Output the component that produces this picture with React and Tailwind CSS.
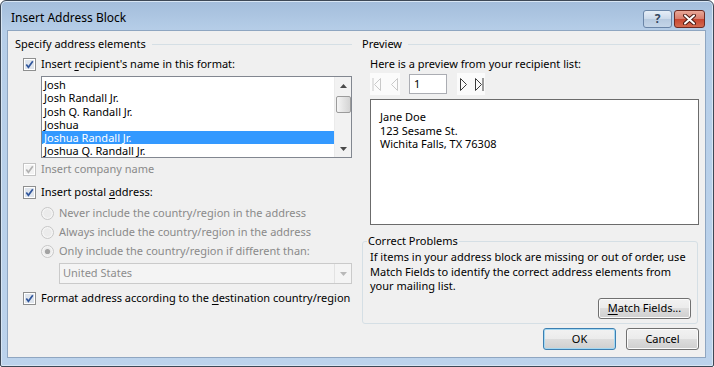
import React from 'react'

const font = "font-['Noto_Sans','Open_Sans',sans-serif]"
const btn = 'flex items-center justify-center rounded-[3px] border bg-[linear-gradient(#f2f2f2,#ebebeb_50%,#dddddd_50%,#cfcfcf)] text-black'
const names = ['Josh', 'Josh Randall Jr.', 'Josh Q. Randall Jr.', 'Joshua', 'Joshua Randall Jr.', 'Joshua Q. Randall Jr.']

function CheckBox({ disabled }) {
    return (
        <svg width="13" height="13" viewBox="0 0 13 13" className="shrink-0">
            <rect x="0.5" y="0.5" width="12" height="12" fill="#fff" stroke={disabled ? '#c4c4c4' : '#8e8f8f'} />
            <rect x="2" y="2" width="9" height="9" fill={disabled ? '#f3f3f3' : '#dfe5ed'} />
            <path d="M3.3 6.6 L5.4 9.3 L9.8 3.3" fill="none" stroke={disabled ? '#b2b2b2' : '#30569c'} strokeWidth="1.7" />
        </svg>
    )
}

function Radio({ checked }) {
    return (
        <svg width="13" height="13" viewBox="0 0 13 13" className="shrink-0">
            <circle cx="6.5" cy="6.5" r="6" fill="#f5f5f5" stroke="#c6c6c6" />
            <circle cx="6.5" cy="6.5" r="4.2" fill="#ebebeb" />
            {checked && <circle cx="6.5" cy="6.5" r="2.6" fill="#a2a2a2" />}
        </svg>
    )
}

function Tri({ dir }) {
    return (
        <svg width="7" height="4" viewBox="0 0 7 4">
            <path d={dir === 'up' ? 'M0 4 L3.5 0 L7 4Z' : 'M0 0 L3.5 4 L7 0Z'} fill="#4a4a4a" />
        </svg>
    )
}

function Nav({ kind, color }) {
    return (
        <svg width="9" height="15" viewBox="0 0 9 15" className="shrink-0">
            {kind === 'first' && <path d="M1 1 V14 M8.5 1.5 L2.5 7.5 L8.5 13.5Z" fill="none" stroke={color} />}
            {kind === 'prev' && <path d="M7.5 1.5 L1.5 7.5 L7.5 13.5Z" fill="none" stroke={color} />}
            {kind === 'next' && <path d="M1.5 1.5 L7.5 7.5 L1.5 13.5Z" fill="none" stroke={color} />}
            {kind === 'last' && <path d="M0.5 1.5 L6.5 7.5 L0.5 13.5Z M8 1 V14" fill="none" stroke={color} />}
        </svg>
    )
}

function GroupHead({ label }) {
    return (
        <div className="mt-[5px] h-[16px] flex items-center">
            <span className="leading-[16px]">{label}</span>
            <div className="flex-1 h-px bg-[#d5dfe5] ml-[6px]" />
        </div>
    )
}

export default function App() {
    return (
        <div className={`${font} text-[11px] text-black whitespace-nowrap w-[714px] h-[367px] flex flex-col border border-[#3d4856] rounded-t-[6px] rounded-b-[2px] bg-[linear-gradient(#a3bddb,#b6cee8_30px,#bcd3ec)] shadow-[inset_0_0_0_1px_#d8e6f4]`}>
            <div className="h-[29px] flex items-start pl-[10px] pr-[8px] shrink-0">
                <span className="mt-[9px] leading-[16px] text-[12px]">Insert Address Block</span>
                <div className="ml-auto mt-[9px] flex gap-[2px]">
                    <div className="w-[29px] h-[18px] rounded-[3px] border border-[#6a85a7] bg-[linear-gradient(#e6eef7,#cbd9ea_50%,#b6c9df_50%,#c4d5e8)] flex items-center justify-center text-[12px] font-bold leading-none text-[#34465c]">?</div>
                    <div className="w-[31px] h-[18px] rounded-[3px] border border-[#6e2a22] bg-[linear-gradient(#e9a898,#d77c6c_50%,#c7442f_50%,#d36a4f)] flex items-center justify-center">
                        <svg width="13" height="11" viewBox="0 0 13 11">
                            <path d="M2 1.5 L11 9.5 M11 1.5 L2 9.5" stroke="#4c1b14" strokeWidth="4" strokeLinecap="round" />
                            <path d="M2 1.5 L11 9.5 M11 1.5 L2 9.5" stroke="#fff" strokeWidth="2" strokeLinecap="round" />
                        </svg>
                    </div>
                </div>
            </div>
            <div className="ml-[6px] w-[699px] h-[328px] border border-[#8fa6c1] bg-[#f0f0f0] flex flex-col">
                <div className="flex items-start">
                    <div className="ml-[7px] w-[337px] flex flex-col">
                        <GroupHead label="Specify address elements" />
                        <div className="mt-[4px] h-[16px] pl-[8px] flex items-center gap-[5px]">
                            <CheckBox />
                            <span>Insert <u className="underline-offset-2">r</u>ecipient's name in this format:</span>
                        </div>
                        <div className="mt-[4px] ml-[26px] w-[311px] h-[82px] border border-[#828790] bg-white flex">
                            <div className="flex-1 pt-[1px] flex flex-col">
                                {names.map((n, i) => (
                                    <div key={n} className={`h-[13.3px] leading-[13.3px] pl-[2px] ${i === 4 ? 'bg-[#3399ff] text-white' : ''}`}>{n}</div>
                                ))}
                            </div>
                            <div className="w-[17px] bg-[#f2f2f2] border-l border-[#ebebeb] flex flex-col items-center">
                                <div className="h-[17px] flex items-center justify-center"><Tri dir="up" /></div>
                                <div className="mt-[2px] w-[15px] h-[17px] rounded-[2px] border border-[#9b9b9b] bg-[linear-gradient(90deg,#f5f5f5,#e4e4e4_50%,#d4d4d4)]" />
                                <div className="mt-auto h-[17px] flex items-center justify-center"><Tri dir="down" /></div>
                            </div>
                        </div>
                        <div className="mt-[3px] h-[16px] pl-[8px] flex items-center gap-[5px] text-[#8a8a8a]">
                            <CheckBox disabled />
                            <span>Insert company name</span>
                        </div>
                        <div className="mt-[7px] h-[16px] pl-[8px] flex items-center gap-[5px]">
                            <CheckBox />
                            <span>Insert postal <u className="underline-offset-2">a</u>ddress:</span>
                        </div>
                        <div className="mt-[5px] h-[16px] pl-[26px] flex items-center gap-[5px] text-[#8a8a8a]">
                            <Radio />
                            <span>Never include the country/region in the address</span>
                        </div>
                        <div className="mt-[3px] h-[16px] pl-[26px] flex items-center gap-[5px] text-[#8a8a8a]">
                            <Radio />
                            <span>Always include the country/region in the address</span>
                        </div>
                        <div className="mt-[3px] h-[16px] pl-[26px] flex items-center gap-[5px] text-[#8a8a8a]">
                            <Radio checked />
                            <span>Only include the country/region if different than:</span>
                        </div>
                        <div className="mt-[4px] ml-[44px] w-[293px] h-[21px] border border-[#cacaca] bg-[#f4f4f4] flex items-center text-[#8d8d8d]">
                            <span className="pl-[3px] flex-1">United States</span>
                            <div className="w-[17px] h-full border-l border-[#e2e2e2] flex items-center justify-center">
                                <svg width="7" height="4" viewBox="0 0 7 4"><path d="M0 0 L3.5 4 L7 0Z" fill="#b8b8b8" /></svg>
                            </div>
                        </div>
                        <div className="mt-[6px] h-[16px] pl-[8px] flex items-center gap-[5px]">
                            <CheckBox />
                            <span>Format address according to the <u className="underline-offset-2">d</u>estination country/region</span>
                        </div>
                    </div>
                    <div className="ml-[10px] w-[338px] flex flex-col">
                        <GroupHead label="Preview" />
                        <div className="mt-[4px] h-[16px] pl-[8px] leading-[16px]">Here is a preview from your recipient list:</div>
                        <div className="mt-[1px] h-[22px] pl-[8px] flex items-center">
                            <div className="w-[30px] h-[22px] bg-[#fbfbfb] flex items-center pl-[2px] gap-[9px]">
                                <Nav kind="first" color="#c9c9c9" />
                                <Nav kind="prev" color="#c9c9c9" />
                            </div>
                            <div className="ml-[9px] w-[38px] h-[20px] border border-[#abadb3] bg-white flex items-center pl-[4px]">1</div>
                            <div className="ml-[10px] w-[28px] h-[22px] bg-[#fbfbfb] flex items-center pl-[2px] gap-[7px]">
                                <Nav kind="next" color="#3c3c3c" />
                                <Nav kind="last" color="#3c3c3c" />
                            </div>
                        </div>
                        <div className="mt-[4px] ml-[8px] w-[329px] h-[126px] border border-[#6b6b6b] bg-white pl-[9px] pt-[10px] leading-[13.5px]">
                            <div>Jane Doe</div>
                            <div>123 Sesame St.</div>
                            <div>Wichita Falls, TX 76308</div>
                        </div>
                        <fieldset className="mt-[8px] w-[336px] border border-[#d5dfe5] rounded-[3px]">
                            <legend className="ml-[4px] px-[1px] leading-[16px]">Correct Problems</legend>
                            <div className="pl-[7px] pr-[6px] pt-[1px] pb-[4px] flex flex-col">
                                <div className="leading-[14.5px]">
                                    If items in your address block are missing or out of order, use<br />
                                    Match Fields to identify the correct address elements from<br />
                                    your mailing list.
                                </div>
                                <div className={`${btn} border-[#707070] self-end mt-[4px] w-[93px] h-[21px] shadow-[inset_0_0_0_1px_#fbfbfb]`}>
                                    <span><u className="underline-offset-2">M</u>atch Fields...</span>
                                </div>
                            </div>
                        </fieldset>
                    </div>
                </div>
                <div className="mt-auto mb-[7px] pr-[6px] flex justify-end gap-[10px]">
                    <div className={`${btn} border-[#3c7fb1] w-[73px] h-[22px] shadow-[inset_0_0_0_1px_#a4d8f2]`}>OK</div>
                    <div className={`${btn} border-[#707070] w-[73px] h-[22px] shadow-[inset_0_0_0_1px_#fbfbfb]`}>Cancel</div>
                </div>
            </div>
        </div>
    )
}
